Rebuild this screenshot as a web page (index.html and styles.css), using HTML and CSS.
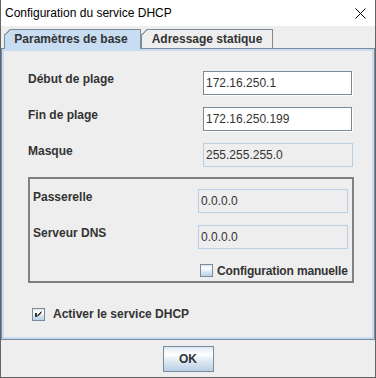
FILE: index.html
```html
<!DOCTYPE html>
<html lang="fr">
<head>
<meta charset="utf-8">
<title>Configuration du service DHCP</title>
<link rel="stylesheet" href="styles.css">
</head>
<body>
<div class="window">
  <div class="titlebar">
    <span class="title">Configuration du service DHCP</span>
    <svg class="close" width="11" height="11" viewBox="0 0 11 11"><path d="M0.5 0.5 L10.5 10.5 M10.5 0.5 L0.5 10.5" stroke="#000" stroke-width="1" fill="none"/></svg>
  </div>
  <div class="tabs">
    <div class="tab tab-sel">Paramètres de base</div>
    <div class="tab tab-other">Adressage statique</div>
  </div>
  <div class="panel">
    <div class="rows">
      <div class="label">Début de plage</div>
      <div class="field">172.16.250.1</div>
      <div class="label">Fin de plage</div>
      <div class="field">172.16.250.199</div>
      <div class="label">Masque</div>
      <div class="field field-dis">255.255.255.0</div>
    </div>
    <div class="group">
      <div class="rows rows-group">
        <div class="label">Passerelle</div>
        <div class="field field-dis">0.0.0.0</div>
        <div class="label">Serveur DNS</div>
        <div class="field field-dis">0.0.0.0</div>
        <div class="check check-manual">
          <span class="box"></span>
          <span class="check-text">Configuration manuelle</span>
        </div>
      </div>
    </div>
    <div class="check check-dhcp">
      <span class="box"><svg width="13" height="13" viewBox="0 0 13 13"><rect x="3" y="5" width="2" height="4" fill="#333"/><path d="M9.5 3.5 L5.5 7.5 M9.5 4.5 L5.5 8.5" stroke="#333" stroke-width="1" fill="none"/></svg></span>
      <span class="check-text">Activer le service DHCP</span>
    </div>
  </div>
  <div class="footer">
    <button class="btn">OK</button>
  </div>
</div>
</body>
</html>
```
FILE: styles.css
```css
html, body {
  margin: 0;
  padding: 0;
  background: #eeeeee;
}

.window {
  width: 376px;
  height: 378px;
  box-sizing: border-box;
  border: 1px solid #646464;
  border-top: none;
  background: #eeeeee;
  display: flex;
  flex-direction: column;
  font-family: "Liberation Sans", Arial, sans-serif;
  font-size: 12px;
  color: #333333;
}

.titlebar {
  flex: none;
  height: 26px;
  background: #ffffff;
  display: flex;
  align-items: center;
  padding-left: 4px;
}

.title {
  color: #000000;
  font-size: 12px;
}

.close {
  margin-left: auto;
  margin-right: 9px;
  display: block;
}

.tabs {
  flex: none;
  display: flex;
  margin-top: 3px;
  padding-left: 3px;
  height: 19px;
  position: relative;
  z-index: 2;
}

.tab {
  position: relative;
  box-sizing: border-box;
  height: 19px;
  border: 1px solid #7a8a99;
  border-bottom: none;
  font-weight: bold;
  font-size: 12px;
  line-height: 18px;
  text-align: center;
  color: #333333;
  clip-path: polygon(6px 0, 100% 0, 100% 100%, 0 100%, 0 6px);
}

.tab::before {
  content: "";
  position: absolute;
  left: -1px;
  top: -1px;
  width: 12px;
  height: 12px;
  background: linear-gradient(135deg, transparent 4.1px, #7a8a99 4.1px, #7a8a99 5.1px, transparent 5.1px);
}

.tab-sel {
  width: 137px;
  height: 20px;
  background: #c8ddf2;
  margin-bottom: -1px;
  padding-right: 3px;
}

.tab-other {
  width: 132px;
  background: #eeeeee;
}

.panel {
  flex: none;
  height: 292px;
  box-sizing: border-box;
  border: 1px solid #7a8a99;
  box-shadow: inset 0 0 0 2px #c8ddf2;
  padding: 2px;
  position: relative;
  z-index: 1;
}

.rows {
  display: grid;
  grid-template-columns: 1fr 150px;
  row-gap: 12px;
  padding: 20px 19px 0 24px;
}

.label {
  align-self: start;
  padding-top: 1px;
  line-height: 15px;
  font-weight: bold;
  color: #333333;
}

.field {
  box-sizing: border-box;
  width: 149px;
  height: 24px;
  border: 1px solid #7a8a99;
  box-shadow: 1px 1px 0 #ffffff;
  background: #ffffff;
  padding: 0 2px;
  display: flex;
  align-items: center;
  color: #333333;
}

.field-dis {
  width: 150px;
  background: #eeeeee;
  border-color: #b8cfe5;
  box-shadow: none;
}

.group {
  margin: 10px 0 0 24px;
  width: 326px;
  height: 106px;
  box-sizing: border-box;
  border: 2px solid #808080;
}

.rows-group {
  padding: 10px 4px 0 3px;
}

.check {
  display: flex;
  align-items: center;
  font-weight: bold;
  color: #333333;
}

.box {
  flex: none;
  width: 13px;
  height: 13px;
  box-sizing: border-box;
  border: 1px solid #7a8a99;
  background: linear-gradient(#dde8f3 0%, #ffffff 30%, #dde8f3 60%, #b8cfe5 100%);
  position: relative;
}

.box svg {
  position: absolute;
  left: -1px;
  top: -1px;
}

.check-manual {
  grid-column: 2;
  height: 19px;
  padding-left: 2px;
  gap: 4px;
  white-space: nowrap;
  letter-spacing: -0.15px;
}

.check-dhcp {
  margin: 24px 0 0 28px;
  gap: 8px;
}

.footer {
  flex: 1;
  display: flex;
  align-items: center;
  justify-content: center;
}

.btn {
  width: 51px;
  height: 26px;
  box-sizing: border-box;
  border: 1px solid #7a8a99;
  background: linear-gradient(#dde8f3 0%, #ffffff 30%, #dde8f3 60%, #b8cfe5 100%);
  font-family: "Liberation Sans", Arial, sans-serif;
  font-weight: bold;
  font-size: 12px;
  color: #333333;
  padding: 0;
  margin-top: 1px;
}
```
